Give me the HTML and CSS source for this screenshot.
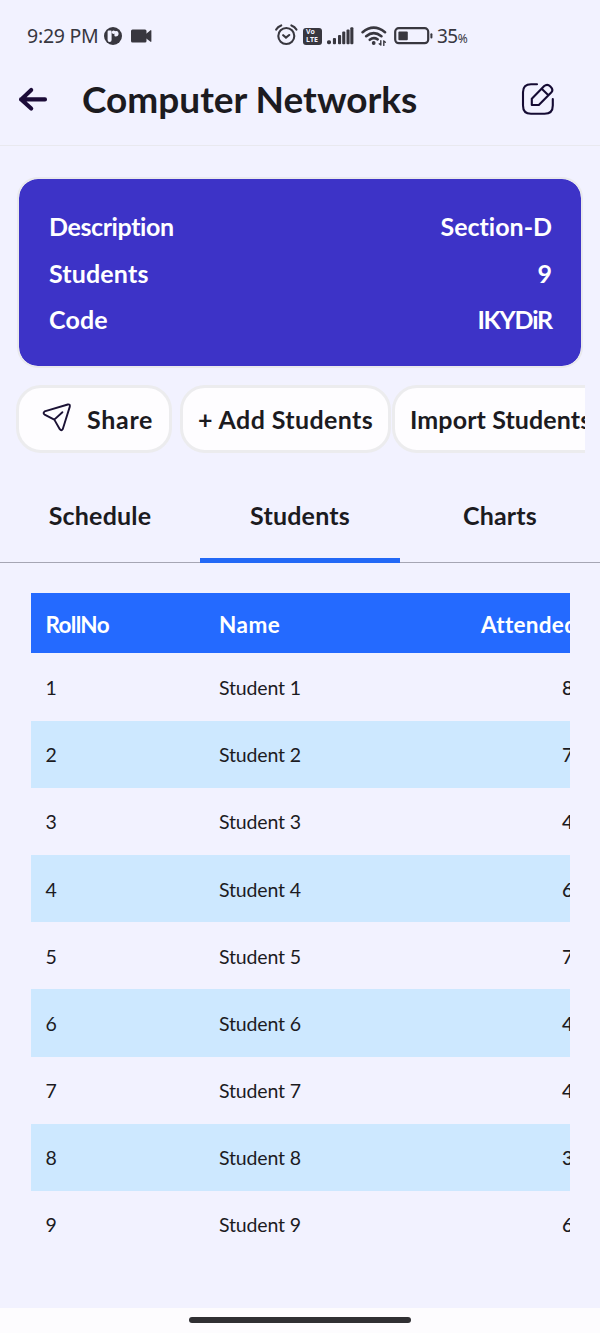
FILE: index.html
```html
<!DOCTYPE html>
<html lang="en">
<head>
<meta charset="utf-8">
<title>Computer Networks</title>
<link rel="stylesheet" href="styles.css">
</head>
<body>
<div class="screen">
  <div class="status">
    <span class="clock">9:29 PM</span>
    <svg class="st-app" width="18" height="18" viewBox="0 0 18 18"><circle cx="9" cy="9" r="9" fill="#38373f"/><path d="M7.2 3.6H4.7Q3.6 3.6 3.6 4.8V13Q3.6 15 5.6 15Q7.6 15 7.6 13V4.2M10.4 4.2V8.6Q10.4 9.6 11.6 9.6Q14.6 9.4 14.6 6.6Q14.4 4.4 12.8 4" fill="#f2f2ff"/><circle cx="9.6" cy="5.2" r="1.8" fill="#f2f2ff"/></svg>
    <svg class="st-cam" width="22" height="14" viewBox="0 0 22 14"><rect x="0" y="0.5" width="15.5" height="13" rx="1.5" fill="#38373f"/><path d="M14 5.8L19.2 1.4Q20.4 .6 20.4 2V12Q20.4 13.4 19.2 12.6L14 8.4Z" fill="#38373f"/></svg>
    <svg class="st-alarm" width="23" height="22" viewBox="0 0 23 22" fill="none" stroke="#38373f" stroke-width="2.1" stroke-linecap="round"><circle cx="11.3" cy="12" r="8"/><path d="M8.2 11.2L11 13.6L14.2 11M1.2 5.6Q2.8 2.6 6.2 1.4M21.4 5.6Q19.8 2.6 16.4 1.4"/></svg>
    <div class="volte"><span>Vo</span><span>LTE</span></div>
    <svg class="st-signal" width="27" height="18" viewBox="0 0 27 18" fill="#38373f"><rect x="0" y="13.2" width="4" height="4" rx="1.6"/><rect x="5.9" y="11" width="3.1" height="6.2" rx="1"/><rect x="11" y="8" width="3.1" height="9.2" rx="1"/><rect x="15.2" y="4.6" width="3.1" height="12.6" rx="1"/><rect x="19.5" y="2.5" width="3.1" height="14.7" rx="1"/><rect x="23.3" y="0.2" width="3.1" height="17" rx="1"/></svg>
    <svg class="st-wifi" width="27" height="21" viewBox="0 0 27 21" fill="none" stroke="#38373f" stroke-width="2.6" stroke-linecap="round"><path d="M1.6 6.2Q12.6 -2.8 24 6.2M5.2 10.2Q12.6 4.2 20.4 10.2M8.8 13.8Q12.6 10.8 16.6 13.4"/><circle cx="12.7" cy="17" r="1.3" fill="#38373f" stroke-width="1.2"/><path stroke-width="1.4" d="M19.8 14.8V19M19.8 19L18.2 17.8M22.8 19.4V15M22.8 15L24.4 16.2"/></svg>
    <svg class="st-batt" width="39" height="18" viewBox="0 0 39 18"><rect x="1.2" y="1.2" width="33" height="15" rx="3.6" fill="none" stroke="#38373f" stroke-width="2.2"/><rect x="4.4" y="4.4" width="9.4" height="8.8" rx="1" fill="#38373f"/><rect x="36.4" y="6.2" width="2" height="5.4" rx="1" fill="#38373f"/></svg>
    <span class="level">35<small>%</small></span>
  </div>
  <header class="appbar">
    <svg class="back" width="30" height="26" viewBox="0 0 30 26" fill="none" stroke="#1c0c38" stroke-width="4.1" stroke-linecap="round" stroke-linejoin="round"><path d="M27 13.4H3M13.2 4L3.2 13.4L13.2 22.6"/></svg>
    <h1 class="title">Computer Networks</h1>
    <svg class="edit" width="34" height="34" viewBox="0 0 34 34" fill="none" stroke="#150b33" stroke-width="2.1" stroke-linecap="round" stroke-linejoin="round"><path d="M16 2.3H10Q2 2.3 2 10.3V23.5Q2 31.8 10 31.8H23.5Q31.8 31.8 31.8 23.5V17"/><path d="M10.8 16.7L23.2 4Q26.3 1.4 29.4 4.4Q32.9 7.7 30.2 10.6L17.8 23H10.8ZM20.7 6.8L27.4 13.2"/></svg>
  </header>
  <section class="card">
    <div class="info"><span class="k-desc">Description</span><span>Section-D</span></div>
    <div class="info"><span class="k-students">Students</span><span>9</span></div>
    <div class="info"><span class="k-students">Code</span><span class="v-code">IKYDiR</span></div>
  </section>
  <div class="actions">
    <div class="pill share"><svg width="30" height="30" viewBox="0 0 30 30" fill="none" stroke="#1b1235" stroke-width="1.9" stroke-linecap="round" stroke-linejoin="round"><path d="M2.6 8.4L25.8 1.5Q28.2 1 27.8 3.6L20.8 26Q19.4 28.3 17.8 26.2L12.3 16.6L2.6 11.6Q.6 10 2.6 8.4ZM12.3 16.6L20.4 9.2"/></svg><span>Share</span></div>
    <div class="pill add"><span>+ Add Students</span></div>
    <div class="pill import"><span>Import Students</span></div>
  </div>
  <nav class="tabs">
    <div class="tab">Schedule</div>
    <div class="tab active">Students</div>
    <div class="tab">Charts</div>
  </nav>
  <div class="table">
    <div class="row head"><span class="roll">RollNo</span><span class="name">Name</span><span class="att">Attended</span></div>
    <div class="row"><span>1</span><span>Student 1</span><span class="num">8</span></div>
    <div class="row alt"><span>2</span><span>Student 2</span><span class="num">7</span></div>
    <div class="row"><span>3</span><span>Student 3</span><span class="num">4</span></div>
    <div class="row alt"><span>4</span><span>Student 4</span><span class="num">6</span></div>
    <div class="row"><span>5</span><span>Student 5</span><span class="num">7</span></div>
    <div class="row alt"><span>6</span><span>Student 6</span><span class="num">4</span></div>
    <div class="row"><span>7</span><span>Student 7</span><span class="num">4</span></div>
    <div class="row alt"><span>8</span><span>Student 8</span><span class="num">3</span></div>
    <div class="row"><span>9</span><span>Student 9</span><span class="num">6</span></div>
  </div>
  <footer class="homebar"><div class="handle"></div></footer>
</div>
</body>
</html>
```
FILE: styles.css
```css
* { box-sizing: border-box; }
body { margin: 0; background: #f2f2ff; color: #1c1b1f; font-family: Lato, sans-serif; font-variant-ligatures: none; }
.screen { width: 600px; height: 1333px; display: flex; flex-direction: column; overflow: hidden; white-space: nowrap; }
.screen > * { flex-shrink: 0; }
.status { height: 72px; padding-left: 27px; display: flex; align-items: center; color: #38373f; font-family: "Noto Sans", sans-serif; }
.clock { width: 77px; margin-top: -2px; font-size: 19.5px; letter-spacing: -0.25px; }
.st-cam { margin-left: 9px; }
.st-alarm { margin-left: 122px; margin-top: -2px; }
.volte { width: 19px; height: 17px; margin-left: 5px; padding: 0.5px 2px 0 3px; border-radius: 3px; background: #38373f; color: #f2f2ff; display: flex; flex-direction: column; font: 700 7px/8px "Open Sans", sans-serif; }
.st-signal { margin-left: 5px; }
.st-wifi { margin-left: 7px; }
.st-batt { margin-left: 6px; margin-top: -1px; }
.level { margin-left: 4px; font-size: 19px; letter-spacing: -0.5px; }
.level small { font-size: 12px; }
.appbar { height: 74px; padding: 0 45px 20px 18px; border-bottom: 1px solid #e9e9ef; display: flex; align-items: center; }
.title { margin: 1px 0 0 34px; font-size: 37px; line-height: 44px; font-weight: 700; letter-spacing: 0; }
.edit { margin-left: auto; }
.card { width: 566px; height: 191px; margin: 31px 0 0 17px; padding: 24px 29px 24px 30px; border: 2px solid #e9e9ed; border-radius: 21px; background: #3d33c7; background-clip: padding-box; color: #fff; display: flex; flex-direction: column; font-size: 25px; font-weight: 700; line-height: 46.5px; }
.info { height: 47.5px; display: flex; justify-content: space-between; }
.k-desc { letter-spacing: -0.4px; }
.k-students { letter-spacing: 0.15px; }
.v-code { letter-spacing: -1.2px; }
.actions { width: 569px; height: 68px; margin: 17px 0 0 16px; display: flex; overflow: hidden; }
.pill { height: 68px; flex-shrink: 0; border: 3px solid #ececee; border-radius: 25px; background: #fefdff; display: flex; align-items: center; font-size: 25px; font-weight: 700; letter-spacing: 0.3px; }
.share { width: 156px; padding-left: 23px; letter-spacing: 0.7px; }
.share span { margin-left: 15px; }
.share svg { margin-top: -2px; }
.add { width: 211px; margin-left: 8px; padding-left: 15px; letter-spacing: 0.4px; }
.import { width: 240px; margin-left: 1px; padding-left: 15px; letter-spacing: 0.1px; }
.tabs { height: 110px; display: grid; grid-template-columns: repeat(3, 1fr); border-bottom: 1px solid #a6a6b4; }
.tab { height: 110px; padding-top: 47px; text-align: center; font-size: 25px; line-height: 30px; font-weight: 700; letter-spacing: 0.2px; }
.active { border-bottom: 5px solid #2369f6; }
.table { width: 539px; height: 715px; margin: 30px 0 0 30.5px; overflow: hidden; }
.row { height: 67.2px; display: grid; grid-template-columns: 173.5px 262px 150px; padding-left: 15px; align-items: center; font-size: 19.5px; letter-spacing: -0.15px; padding-top: 1px; }
.row.head { height: 60.4px; background: #246aff; color: #fff; font-size: 22.5px; font-weight: 700; padding-top: 2px; }
.roll { letter-spacing: -0.7px; }
.name { letter-spacing: 0.5px; }
.att { letter-spacing: 0.3px; }
.alt { background: #cde8ff; }
.num { padding-left: 81px; font-weight: 500; }
.homebar { height: 25px; background: #fdfcfe; display: flex; justify-content: center; padding-top: 9px; }
.handle { width: 222px; height: 6px; border-radius: 3px; background: #303033; }
```
